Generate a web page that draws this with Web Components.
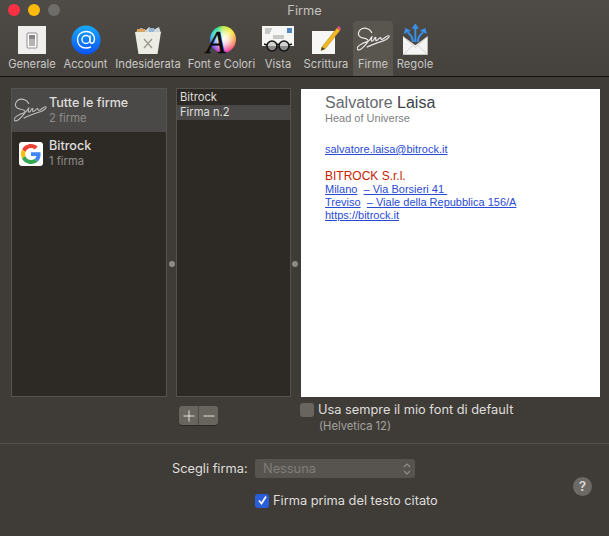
<!DOCTYPE html>
<html>
<head>
<meta charset="utf-8">
<title>Firme</title>
<style>
  html, body { margin: 0; padding: 0; background: #3f3c37; }
  body { font-family: Inter, "Liberation Sans", sans-serif; color: #e4e3e1; }
</style>
</head>
<body>
<mail-window>
  <mail-toolbar slot="top"></mail-toolbar>
  <account-list slot="accounts"></account-list>
  <signature-list slot="signatures"></signature-list>
  <signature-preview slot="preview"></signature-preview>
  <mail-footer slot="bottom"></mail-footer>
</mail-window>

<script>
const SIGNATURE_PATH = 'M58 44 C52 28 30 24 20 36 C12 48 18 58 32 60 C46 62 50 66 42 76 C32 88 20 100 14 95 C8 88 24 76 46 70 C52 68 54 58 58 56 C56 64 54 72 61 68 C65 64 67 56 70 58 C70 64 68 70 75 66 C79 62 81 58 85 58 C85 62 87 66 93 62 C99 58 107 50 111 53 C113 56 105 64 93 68 C77 73 56 80 42 88';

class MailWindow extends HTMLElement {
  constructor() {
    super();
    this.attachShadow({ mode: 'open' });
    this.shadowRoot.innerHTML = `
      <style>
        :host { display: flex; flex-direction: column; width: 609px; height: 536px; overflow: hidden; background: #3f3c37; }
        .panes { display: flex; padding: 11px 9px 0 11px; height: 309px; }
        .split { display: flex; align-items: center; justify-content: center; padding-top: 42px; box-sizing: border-box; }
        .split i { width: 6px; height: 6px; border-radius: 50%; background: #8d8b88; }
        .a { width: 9px; } .b { width: 10px; padding-right: 2px; }
      </style>
      <slot name="top"></slot>
      <div class="panes">
        <slot name="accounts"></slot>
        <div class="split a"><i></i></div>
        <slot name="signatures"></slot>
        <div class="split b"><i></i></div>
        <slot name="preview"></slot>
      </div>
      <slot name="bottom"></slot>
    `;
  }
}

class MailToolbar extends HTMLElement {
  constructor() {
    super();
    this.attachShadow({ mode: 'open' });
    const items = [
      ['Generale', 50, this.general()],
      ['Account', 57, this.account()],
      ['Indesiderata', 68, this.junk()],
      ['Font e Colori', 79, this.fonts()],
      ['Vista', 34, this.view()],
      ['Scrittura', 58, this.compose(), false, 4],
      ['Firme', 40, this.signature(), true],
      ['Regole', 44, this.rules()]
    ];
    this.shadowRoot.innerHTML = `
      <style>
        :host { display: block; height: 77px; box-sizing: border-box; background: linear-gradient(#4f4c47, #45423d); border-bottom: 1px solid #131210; }
        .title { position: relative; height: 21px; text-align: center; font-size: 12.8px; line-height: 21px; color: #c4c2bf; }
        .lights { position: absolute; left: 8px; top: 4px; display: flex; gap: 8px; }
        .lights i { width: 12px; height: 12px; border-radius: 50%; }
        .bar { display: flex; height: 55px; padding-left: 7px; }
        .item { display: flex; flex-direction: column; align-items: center; font-size: 11.2px; color: #c9c7c4; white-space: nowrap; box-sizing: border-box; border-radius: 4px 4px 0 0; }
        .item.on { background: #59564f; }
        .icon { height: 37px; display: flex; align-items: center; justify-content: center; }
        .item span { line-height: 13px; }
      </style>
      <div class="title">
        <div class="lights"><i style="background:#fe3043"></i><i style="background:#fdbb0b"></i><i style="background:#6f6d6a"></i></div>
        Firme
      </div>
      <div class="bar">
        ${items.map(([name, w, icon, on, pad]) => `
          <div class="item ${on ? 'on' : ''}" style="width:${w}px;padding-left:${pad || 0}px">
            <div class="icon">${icon}</div><span>${name}</span>
          </div>`).join('')}
      </div>
    `;
  }

  general() {
    return `<svg width="28" height="28" viewBox="0 0 28 28">
      <rect width="28" height="28" fill="#f0efee"/>
      <rect x="9" y="7" width="10" height="15" rx="1" fill="#fff" stroke="#8f8e8c"/>
      <rect x="11" y="9" width="6" height="11" fill="#b4b3b1"/>
      <rect x="11" y="9" width="6" height="4" fill="#88878a"/>
    </svg>`;
  }

  account() {
    return `<svg width="30" height="30" viewBox="0 0 30 30">
      <defs><linearGradient id="ac" x1="0" y1="0" x2="0" y2="1"><stop offset="0" stop-color="#16a9fb"/><stop offset="1" stop-color="#0a52f5"/></linearGradient></defs>
      <circle cx="15" cy="15" r="14.5" fill="url(#ac)"/>
      <circle cx="15" cy="14.5" r="4" fill="none" stroke="#fff" stroke-width="1.4"/>
      <path d="M19 10.5 V16.5 C19 19 23 19 23.4 15 C24 9.5 20 6.5 15 6.5 C10 6.5 6.5 10 6.5 14.7 C6.5 19.5 10 23 15 23 C17 23 18.5 22.6 20 21.8" fill="none" stroke="#fff" stroke-width="1.4"/>
    </svg>`;
  }

  junk() {
    return `<svg width="28" height="30" viewBox="0 0 28 30">
      <path d="M2 7 L7 3 L12 5 L15 2 L19 5 L25 2 L27 8 L2 9Z" fill="#cfd6da"/>
      <path d="M3 4 H11 V7 H3Z" fill="#d9a55e"/><path d="M15 3 H20 V7 H15Z" fill="#8fb6d4"/>
      <path d="M1 7 H27 L23.5 29 H4.5Z" fill="#ecebe4"/>
      <path d="M10 14 L18 23 M18 14 L10 23" stroke="#9c9a8e" stroke-width="1.3"/>
    </svg>`;
  }

  fonts() {
    return `<div style="position:relative;width:28px;height:28px">
      <div style="width:26px;height:27px;border-radius:50%;margin-left:2px;background:radial-gradient(circle,#fff 0,rgba(255,255,255,.75) 30%,rgba(255,255,255,0) 75%),conic-gradient(#b4e830,#f8e820 45deg,#f89030 90deg,#f04060 135deg,#e020c0 180deg,#8030e0 225deg,#3060f0 255deg,#10c8e0 295deg,#20d880 335deg,#b4e830)"></div>
      <div style="position:absolute;left:-1px;top:3px;font:italic 400 31px/28px 'Liberation Serif',serif;-webkit-text-stroke:.6px #0a0a0a;color:#0a0a0a">A</div>
    </div>`;
  }

  view() {
    return `<svg width="33" height="27" viewBox="0 0 33 27">
      <rect y="0" width="32" height="20" fill="#f6f6f4"/>
      <rect x="25" y="2" width="5" height="5" fill="#4f86c0"/>
      <path d="M3 3 H10 M3 5 H9 M3 7 H8 M11 10 H22 M11 12 H22" stroke="#9a9a98"/>
      <circle cx="10" cy="20" r="5" fill="#bbb" fill-opacity=".6" stroke="#161616" stroke-width="1.6"/>
      <circle cx="22" cy="20" r="5" fill="#bbb" fill-opacity=".6" stroke="#161616" stroke-width="1.6"/>
      <path d="M15 19 Q16 17.500 17 19 M5 19 L2 18 M27 19 L30 18" stroke="#161616" stroke-width="1.4" fill="none"/>
    </svg>`;
  }

  compose() {
    return `<svg width="30" height="30" viewBox="0 0 30 30">
      <rect x="1" y="6" width="23" height="23" fill="#f7f7f5"/>
      <path d="M11 22 L26 3 L29 5.500 L14 24 L10 25.500Z" fill="#f4b81f" stroke="#a97c12" stroke-width=".5"/>
      <path d="M26 3 L27.500 1 L30 3.500 L29 5.500Z" fill="#ea4e83"/>
      <path d="M11 22 L10 25.500 L14 24Z" fill="#4a3a2a"/>
    </svg>`;
  }

  signature() {
    return `<svg width="33" height="25" viewBox="12 26 102 76"><path d="${SIGNATURE_PATH}" fill="none" stroke="#e6e5e3" stroke-width="3.8"/></svg>`;
  }

  rules() {
    return `<svg width="27" height="31" viewBox="145 8 81 93">
      <path d="M148 45 L185 72 L222 45 V100 H148Z" fill="#f4f4f4"/>
      <path d="M148 100 L178 72 M222 100 L192 72" stroke="#c4c4c4" stroke-width="2" fill="none"/>
      <path d="M148 45 L185 78 L222 45" stroke="#b5b5b5" stroke-width="2" fill="none"/>
      <path d="M185 62 V20 M178 62 Q176 42 162 34 M192 62 Q194 42 208 34" stroke="#3a8fe6" stroke-width="6" fill="none"/>
      <path d="M174 22 L185 6 L196 22Z M150 38 L155 20 L172 28Z M220 38 L215 20 L198 28Z" fill="#3a8fe6"/>
    </svg>`;
  }
}

class AccountList extends HTMLElement {
  constructor() {
    super();
    this.attachShadow({ mode: 'open' });
    this.shadowRoot.innerHTML = `
      <style>
        :host { display: block; width: 156px; height: 309px; box-sizing: border-box; background: #2d2a25; border: 1px solid #55534e; }
        .row { display: flex; align-items: center; height: 43px; }
        .row.on { background: #4a4947; }
        .pic { width: 37px; display: flex; justify-content: center; flex: none; }
        .name { font-size: 12.6px; font-weight: 500; line-height: 15px; color: #dfdedc; margin-top: -1px; }
        .sub { font-size: 11.2px; line-height: 16px; color: #8f8d8a; }
        .g { width: 24px; height: 24px; background: #fff; border-radius: 3px; display: flex; align-items: center; justify-content: center; }
      </style>
      <div class="row on">
        <div class="pic"><svg width="33" height="25" viewBox="12 26 102 76"><path d="${SIGNATURE_PATH}" fill="none" stroke="#bdbcba" stroke-width="3.4"/></svg></div>
        <div><div class="name">Tutte le firme</div><div class="sub">2 firme</div></div>
      </div>
      <div class="row">
        <div class="pic"><div class="g">
          <svg width="20" height="20" viewBox="0 0 48 48">
            <path fill="#EA4335" d="M24 9.500c3.500 0 6.700 1.300 9.200 3.400l6.900-6.900C35.900 2.400 30.300 0 24 0 14.600 0 6.500 5.400 2.600 13.200l8 6.200C12.500 13.700 17.800 9.500 24 9.500z"/>
            <path fill="#4285F4" d="M47 24.500c0-1.600-.1-3.100-.4-4.500H24v9h13c-.6 3-2.300 5.500-4.800 7.200l7.700 6C44.400 37.900 47 31.800 47 24.500z"/>
            <path fill="#FBBC05" d="M10.600 28.600C10.100 27.200 9.800 25.600 9.800 24s.3-3.200.8-4.600l-8-6.200C1 16.400 0 20.100 0 24s1 7.600 2.600 10.800l8-6.200z"/>
            <path fill="#34A853" d="M24 48c6.500 0 11.900-2.100 15.900-5.800l-7.700-6c-2.200 1.400-4.900 2.300-8.200 2.300-6.200 0-11.500-4.200-13.400-9.900l-8 6.200C6.500 42.600 14.600 48 24 48z"/>
          </svg>
        </div></div>
        <div><div class="name">Bitrock</div><div class="sub">1 firma</div></div>
      </div>
    `;
  }
}

class SignatureList extends HTMLElement {
  constructor() {
    super();
    this.attachShadow({ mode: 'open' });
    this.shadowRoot.innerHTML = `
      <style>
        :host { display: block; width: 115px; height: 309px; box-sizing: border-box; background: #2d2a25; border: 1px solid #55534e; font-size: 11.2px; color: #dfdedc; }
        div { height: 16px; line-height: 17px; padding-left: 3px; }
        .on { height: 15px; line-height: 15px; background: #4a4947; }
      </style>
      <div>Bitrock</div>
      <div class="on">Firma n.2</div>
    `;
  }
}

class SignaturePreview extends HTMLElement {
  constructor() {
    super();
    this.attachShadow({ mode: 'open' });
    this.shadowRoot.innerHTML = `
      <style>
        :host { display: block; width: 299px; height: 308px; margin-top: 1px; box-sizing: border-box; background: #fff; padding: 4px 0 0 24px; font-family: "Liberation Sans", Arial, sans-serif; font-size: 11px; line-height: 13px; color: #222; }
        .name { font-size: 16px; line-height: 19px; color: #666a6e; }
        .name b { font-weight: 400; color: #3b4248; }
        .role { color: #808080; line-height: 13px; }
        a { color: #2a4bd4; text-decoration: underline; }
        .mail { margin-top: 18px; }
        .co { margin-top: 14px; color: #c72300; font-size: 12px; line-height: 13px; }
      </style>
      <div class="name">Salvatore <b>Laisa</b></div>
      <div class="role">Head of Universe</div>
      <div class="mail"><a>salvatore.laisa@bitrock.it</a></div>
      <div class="co">BITROCK S.r.l.</div>
      <div><a>Milano</a>&nbsp;&nbsp;<a>– Via Borsieri 41&nbsp;</a></div>
      <div><a>Treviso</a>&nbsp;&nbsp;<a>– Viale della Repubblica 156/A</a></div>
      <div><a>https://bitrock.it</a></div>
    `;
  }
}

class MailFooter extends HTMLElement {
  constructor() {
    super();
    this.attachShadow({ mode: 'open' });
    this.shadowRoot.innerHTML = `
      <style>
        :host { display: block; position: relative; flex: 1; font-size: 12.8px; color: #dfdedc; }
        .tools { display: flex; height: 47px; box-sizing: border-box; border-bottom: 1px solid #55524d; }
        .pm { display: flex; width: 39px; height: 19px; margin: 9px 0 0 179px; background: #68655f; border-radius: 3px; box-shadow: 0 1px 1px #2a2824; }
        .pm span { flex: 1; display: flex; align-items: center; justify-content: center; }
        .pm span + span { border-left: 1px solid #4f4c47; }
        .use { margin: 5px 0 0 82px; }
        .use .line { display: flex; align-items: center; gap: 4px; height: 15px; }
        .box { width: 14px; height: 14px; border-radius: 3px; background: #68655f; flex: none; box-sizing: border-box; }
        .hint { font-size: 11.2px; color: #a5a3a0; margin: 2px 0 0 19px; line-height: 14px; }
        .pick { display: flex; align-items: center; margin: 15px 0 0 172px; height: 19px; }
        .pick > span { width: 83px; }
        .select { display: flex; align-items: center; justify-content: space-between; width: 160px; height: 19px; box-sizing: border-box; padding: 0 3px 0 8px; background: #57544f; border-radius: 3px; color: #7f7d79; }
        .quote { display: flex; align-items: center; gap: 4px; margin: 15px 0 0 255px; height: 15px; }
        .check { background: #2a5ed9; display: flex; align-items: center; justify-content: center; }
        .help { position: absolute; right: 17px; top: 80px; width: 19px; height: 19px; border-radius: 50%; background: #6d6a66; color: #dddcda; font-size: 13px; font-weight: 600; line-height: 19px; text-align: center; }
      </style>
      <div class="tools">
        <div class="pm">
          <span><svg width="12" height="12"><path d="M6 .5 V11.500 M.5 6 H11.500" stroke="#e4e3e1" stroke-width="1"/></svg></span>
          <span><svg width="12" height="12"><path d="M.5 6 H11.500" stroke="#e4e3e1" stroke-width="1"/></svg></span>
        </div>
        <div class="use">
          <div class="line"><span class="box"></span><span>Usa sempre il mio font di default</span></div>
          <div class="hint">(Helvetica 12)</div>
        </div>
      </div>
      <div class="pick">
        <span>Scegli firma:</span>
        <div class="select"><span>Nessuna</span>
          <svg width="10" height="14" viewBox="0 0 10 14"><path d="M2 5 L5 2 L8 5 M2 9 L5 12 L8 9" fill="none" stroke="#8f8d89" stroke-width="1.2"/></svg>
        </div>
      </div>
      <div class="quote">
        <span class="box check"><svg width="11" height="11" viewBox="0 0 11 11"><path d="M2 5.500 L4.500 8.500 L9 1.500" fill="none" stroke="#fff" stroke-width="1.7"/></svg></span>
        <span>Firma prima del testo citato</span>
      </div>
      <div class="help">?</div>
    `;
  }
}

customElements.define('mail-window', MailWindow);
customElements.define('mail-toolbar', MailToolbar);
customElements.define('account-list', AccountList);
customElements.define('signature-list', SignatureList);
customElements.define('signature-preview', SignaturePreview);
customElements.define('mail-footer', MailFooter);
</script>
</body>
</html>
